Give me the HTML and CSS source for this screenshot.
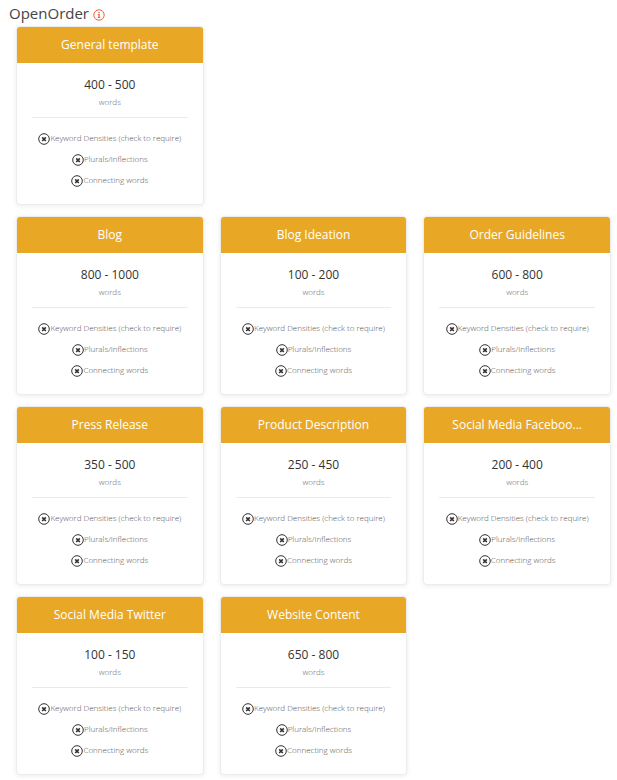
FILE: index.html
```html
<!DOCTYPE html>
<html lang="en">
  <head>
    <meta charset="UTF-8" />
    <meta name="viewport" content="width=device-width, initial-scale=1.0" />
    <title>OpenOrder</title>
    <link rel="stylesheet" href="styles.css" />
  </head>
  <body>
    <!-- Shared icons -->
    <svg class="sprite" aria-hidden="true">
      <symbol id="icon-info" viewBox="0 0 12 12">
        <circle cx="6" cy="6" r="5.2" fill="none" stroke="currentColor" />
        <path d="M5.4 3h1.3v1.2H5.4zM4.8 5.1h1.9v3h.6v.9H4.7v-.9h.7V6h-.6z" fill="currentColor" />
      </symbol>
      <symbol id="icon-cross" viewBox="0 0 12 12">
        <circle cx="6" cy="6" r="5.3" fill="none" stroke="currentColor" />
        <path d="M4.2 4.4l3.6 3.6M7.8 4.4L4.2 8" fill="none" stroke="currentColor" stroke-width="1.6" />
      </symbol>
    </svg>

    <main class="page">
      <h1 class="page-title">
        OpenOrder
        <svg class="icon-info" role="img" aria-label="Info"><use href="#icon-info" /></svg>
      </h1>

      <div class="templates">
        <section class="card card-general">
          <h2 class="card-title">General template</h2>
          <div class="card-body">
            <p class="range">400 - 500</p>
            <p class="unit">words</p>
            <ul class="options">
              <li><svg class="icon-cross"><use href="#icon-cross" /></svg>Keyword Densities (check to require)</li>
              <li><svg class="icon-cross"><use href="#icon-cross" /></svg>Plurals/Inflections</li>
              <li><svg class="icon-cross"><use href="#icon-cross" /></svg>Connecting words</li>
            </ul>
          </div>
        </section>

        <section class="card">
          <h2 class="card-title">Blog</h2>
          <div class="card-body">
            <p class="range">800 - 1000</p>
            <p class="unit">words</p>
            <ul class="options">
              <li><svg class="icon-cross"><use href="#icon-cross" /></svg>Keyword Densities (check to require)</li>
              <li><svg class="icon-cross"><use href="#icon-cross" /></svg>Plurals/Inflections</li>
              <li><svg class="icon-cross"><use href="#icon-cross" /></svg>Connecting words</li>
            </ul>
          </div>
        </section>

        <section class="card">
          <h2 class="card-title">Blog Ideation</h2>
          <div class="card-body">
            <p class="range">100 - 200</p>
            <p class="unit">words</p>
            <ul class="options">
              <li><svg class="icon-cross"><use href="#icon-cross" /></svg>Keyword Densities (check to require)</li>
              <li><svg class="icon-cross"><use href="#icon-cross" /></svg>Plurals/Inflections</li>
              <li><svg class="icon-cross"><use href="#icon-cross" /></svg>Connecting words</li>
            </ul>
          </div>
        </section>

        <section class="card">
          <h2 class="card-title">Order Guidelines</h2>
          <div class="card-body">
            <p class="range">600 - 800</p>
            <p class="unit">words</p>
            <ul class="options">
              <li><svg class="icon-cross"><use href="#icon-cross" /></svg>Keyword Densities (check to require)</li>
              <li><svg class="icon-cross"><use href="#icon-cross" /></svg>Plurals/Inflections</li>
              <li><svg class="icon-cross"><use href="#icon-cross" /></svg>Connecting words</li>
            </ul>
          </div>
        </section>

        <section class="card">
          <h2 class="card-title">Press Release</h2>
          <div class="card-body">
            <p class="range">350 - 500</p>
            <p class="unit">words</p>
            <ul class="options">
              <li><svg class="icon-cross"><use href="#icon-cross" /></svg>Keyword Densities (check to require)</li>
              <li><svg class="icon-cross"><use href="#icon-cross" /></svg>Plurals/Inflections</li>
              <li><svg class="icon-cross"><use href="#icon-cross" /></svg>Connecting words</li>
            </ul>
          </div>
        </section>

        <section class="card">
          <h2 class="card-title">Product Description</h2>
          <div class="card-body">
            <p class="range">250 - 450</p>
            <p class="unit">words</p>
            <ul class="options">
              <li><svg class="icon-cross"><use href="#icon-cross" /></svg>Keyword Densities (check to require)</li>
              <li><svg class="icon-cross"><use href="#icon-cross" /></svg>Plurals/Inflections</li>
              <li><svg class="icon-cross"><use href="#icon-cross" /></svg>Connecting words</li>
            </ul>
          </div>
        </section>

        <section class="card">
          <h2 class="card-title">Social Media Faceboo...</h2>
          <div class="card-body">
            <p class="range">200 - 400</p>
            <p class="unit">words</p>
            <ul class="options">
              <li><svg class="icon-cross"><use href="#icon-cross" /></svg>Keyword Densities (check to require)</li>
              <li><svg class="icon-cross"><use href="#icon-cross" /></svg>Plurals/Inflections</li>
              <li><svg class="icon-cross"><use href="#icon-cross" /></svg>Connecting words</li>
            </ul>
          </div>
        </section>

        <section class="card">
          <h2 class="card-title">Social Media Twitter</h2>
          <div class="card-body">
            <p class="range">100 - 150</p>
            <p class="unit">words</p>
            <ul class="options">
              <li><svg class="icon-cross"><use href="#icon-cross" /></svg>Keyword Densities (check to require)</li>
              <li><svg class="icon-cross"><use href="#icon-cross" /></svg>Plurals/Inflections</li>
              <li><svg class="icon-cross"><use href="#icon-cross" /></svg>Connecting words</li>
            </ul>
          </div>
        </section>

        <section class="card">
          <h2 class="card-title">Website Content</h2>
          <div class="card-body">
            <p class="range">650 - 800</p>
            <p class="unit">words</p>
            <ul class="options">
              <li><svg class="icon-cross"><use href="#icon-cross" /></svg>Keyword Densities (check to require)</li>
              <li><svg class="icon-cross"><use href="#icon-cross" /></svg>Plurals/Inflections</li>
              <li><svg class="icon-cross"><use href="#icon-cross" /></svg>Connecting words</li>
            </ul>
          </div>
        </section>
      </div>
    </main>
  </body>
</html>
```

FILE: styles.css
```css
* {
  box-sizing: border-box;
}

body {
  margin: 0;
  background: #fff;
  color: #333;
  font-family: "Open Sans", sans-serif;
}

h1,
h2,
p,
ul {
  margin: 0;
  padding: 0;
  font-weight: 400;
}

.sprite {
  display: none;
}

.page {
  padding: 2px 6px 4px 9px;
}

.page-title {
  display: flex;
  align-items: center;
  gap: 4px;
  font-size: 15px;
  line-height: 22px;
  padding-bottom: 2px;
  color: #444;
}

.icon-info {
  width: 12px;
  height: 12px;
  margin-top: 3px;
  color: #e8663d;
}

.templates {
  display: grid;
  grid-template-columns: repeat(3, 1fr);
  gap: 11px 16px;
  padding-left: 7px;
}

/* the general template sits alone on the first row */
.card-general {
  grid-row: 1;
  grid-column: 1;
}

.card-general + .card {
  grid-column: 1;
}

.card {
  border: 1px solid #ececec;
  border-radius: 4px;
  background: #fff;
  box-shadow: 0 1px 5px rgba(0, 0, 0, 0.08);
  text-align: center;
  overflow: hidden;
}

.card-title {
  background: #e8a825;
  color: #fff;
  font-size: 12px;
  line-height: 20px;
  padding: 8px;
  white-space: nowrap;
}

.card-body {
  padding: 13px 15px 14px;
}

.range {
  font-size: 12px;
  line-height: 18px;
}

.unit {
  color: #666;
  font-size: 8px;
  font-weight: 300;
  line-height: 16px;
  padding-bottom: 7px;
  border-bottom: 1px solid #eaeaea;
}

.options {
  list-style: none;
  padding-top: 9px;
  color: #555;
  font-size: 8px;
  font-weight: 300;
  line-height: 21px;
}

.options li {
  display: flex;
  justify-content: center;
  align-items: center;
}

.icon-cross {
  flex: none;
  width: 12px;
  height: 12px;
  margin-top: 2px;
  color: #333;
}
```
